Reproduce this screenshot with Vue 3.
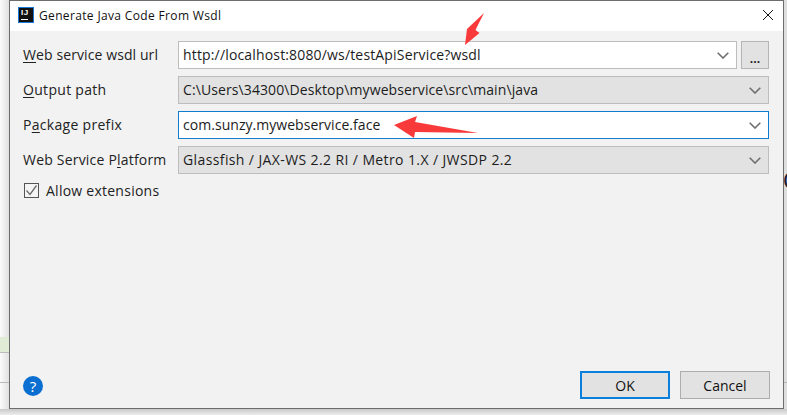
<script setup>
const rows = [
  { label: ['', 'W', 'eb service wsdl url'], value: 'http://localhost:8080/ws/testApiService?wsdl', kind: 'edit', more: true, ls: 0.1, vs: 0.16 },
  { label: ['', 'O', 'utput path'], value: 'C:\\Users\\34300\\Desktop\\mywebservice\\src\\main\\java', kind: 'plain', ls: 0.3, vs: 0.1 },
  { label: ['P', 'a', 'ckage prefix'], value: 'com.sunzy.mywebservice.face', kind: 'focus', ls: 0.3, vs: 0.04 },
  { label: ['Web Service P', 'l', 'atform'], value: 'Glassfish / JAX-WS 2.2 RI / Metro 1.X / JWSDP 2.2', kind: 'plain', ls: 0.2, vs: 0.39 },
]
</script>

<template>
  <div class="page">
    <div class="main">
      <div class="side">
        <div class="band"></div>
        <div class="line"></div>
      </div>
      <div class="dialog">
        <div class="titlebar">
          <div class="logo"><span class="ij">IJ</span><span class="bar"></span></div>
          <span class="title">Generate Java Code From Wsdl</span>
          <svg class="close" width="12" height="12" viewBox="0 0 12 12"><path d="M1 1L11 11M11 1L1 11" stroke="#111" stroke-width="1" fill="none"/></svg>
        </div>
        <div class="body">
          <div class="form">
            <div v-for="r in rows" :key="r.value" class="row">
              <label class="label" :style="{ letterSpacing: r.ls + 'px' }">{{ r.label[0] }}<u>{{ r.label[1] }}</u>{{ r.label[2] }}</label>
              <div class="combo" :class="r.kind">
                <span class="val" :style="{ letterSpacing: r.vs + 'px' }">{{ r.value }}</span>
                <svg class="chev" width="12" height="7" viewBox="0 0 12 7"><path d="M0.7 0.7L6 6L11.3 0.7" stroke="#6e6e6e" stroke-width="1.6" fill="none"/></svg>
              </div>
              <button v-if="r.more" class="more">...</button>
            </div>
            <label class="check">
              <span class="box"><svg width="13" height="13" viewBox="0 0 13 13"><path d="M1.5 6.5L5 10.5L11.5 1.5" stroke="#6b6b6b" stroke-width="1.3" fill="none"/></svg></span>
              <span>Allow extensions</span>
            </label>
          </div>
          <div class="footer">
            <div class="help">?</div>
            <div class="btns">
              <button class="btn ok">OK</button>
              <button class="btn">Cancel</button>
            </div>
          </div>
        </div>
        <svg class="arrow a1" width="22" height="34" viewBox="0 0 22 34"><path d="M20 0L3 16L1 32L15.5 20L11.5 17Z" fill="#f93a3a"/></svg>
        <svg class="arrow a2" width="86" height="24" viewBox="0 0 86 24"><path d="M1 10L24 1L22 7L85 18L22 17L21 23Z" fill="#f93a3a"/></svg>
      </div>
      <div class="rest">
        <span class="peek">C</span>
        <div class="line low"></div>
      </div>
    </div>
    <div class="under"></div>
  </div>
</template>

<style>
html, body { margin: 0; background: #fff; }
</style>

<style scoped>
.page {
  width: 787px;
  height: 415px;
  overflow: hidden;
  background: #e4e4e4;
  font-family: "Open Sans", "Noto Sans", sans-serif;
  color: #222;
  display: flex;
  flex-direction: column;
}
.main { display: flex; height: 409px; flex: none; }
.under { flex: 1; background: linear-gradient(180deg, #c9c9c9, #ececec); }
.side {
  width: 9px;
  flex: none;
  padding-top: 337px;
  box-sizing: border-box;
  background: linear-gradient(90deg, #fbfbfb, #e0e0e0);
}
.band { height: 15px; background: #e0ecd6; border-bottom: 1px solid #bcbcbc; }
.line { height: 1px; margin-top: 29px; background: #bcbcbc; }
.rest {
  flex: 1;
  position: relative;
  overflow: hidden;
  background: #dedede;
}
.peek {
  position: absolute;
  left: -1px;
  top: 166px;
  font: 24px/30px "Liberation Sans", sans-serif;
  color: #1c1c3a;
}
.line.low { margin-top: 382px; background: #b5b5b5; }
.dialog {
  position: relative;
  box-sizing: border-box;
  width: 775px;
  height: 409px;
  flex: none;
  background: #f2f2f2;
  border: 1px solid #6d6d6d;
  display: flex;
  flex-direction: column;
}
.titlebar {
  height: 30px;
  background: #fff;
  display: flex;
  align-items: center;
  padding: 0 9px 2px 8px;
  box-sizing: border-box;
  flex: none;
}
.logo {
  width: 16px;
  height: 16px;
  box-sizing: border-box;
  background: #111;
  border: 1px solid #1a78d8;
  position: relative;
  margin-right: 5px;
}
.ij { position: absolute; left: 2px; top: 0; font: bold 8px/10px "Liberation Sans", sans-serif; color: #fff; letter-spacing: 0.5px; }
.bar { position: absolute; left: 2px; bottom: 2px; width: 7px; height: 1px; background: #fff; }
.title { font-size: 12px; color: #111; flex: 1; letter-spacing: 0.35px; }
.body { flex: 1; display: flex; flex-direction: column; padding: 10px 14px 9px 13px; justify-content: space-between; }
.form { display: flex; flex-direction: column; gap: 7px; }
.row { display: flex; align-items: center; height: 28px; }
.label { width: 155px; font-size: 14px; flex: none; padding-bottom: 2px; }
.label u { text-decoration-thickness: 1px; text-underline-offset: 2px; }
.combo {
  flex: 1;
  height: 28px;
  box-sizing: border-box;
  border: 1px solid #bdbdbd;
  display: flex;
  align-items: center;
  justify-content: space-between;
  padding: 0 7px 0 4px;
  font-size: 14px;
  background: #e2e2e2;
  color: #1c1c1c;
}
.combo.edit, .combo.focus { background: #fff; }
.combo.focus { border-color: #0f7ed0; }
.val { white-space: pre; padding-bottom: 2px; }
.more {
  width: 28px;
  height: 28px;
  margin-left: 4px;
  box-sizing: border-box;
  border: 1px solid #b5b5b5;
  background: #e2e2e2;
  font: bold 12px/22px "Open Sans", sans-serif;
  padding: 6px 0 0;
  color: #222;
}
.check { display: flex; align-items: center; gap: 7px; font-size: 14px; letter-spacing: 0.25px; margin-top: -3px; height: 24px; }
.box {
  width: 15px;
  height: 15px;
  box-sizing: border-box;
  border: 1px solid #555;
  background: #f5f5f5;
  display: flex;
  align-items: center;
  justify-content: center;
  margin-left: 1px;
}
.footer { display: flex; align-items: center; justify-content: space-between; margin-right: -1px; }
.help {
  width: 20px;
  height: 20px;
  margin-top: 2px;
  border-radius: 50%;
  background: #0a6fd0;
  color: #fff;
  text-align: center;
  font: 15px/20px "Open Sans", sans-serif;
}
.btns { display: flex; gap: 10px; }
.btn {
  width: 90px;
  height: 28px;
  box-sizing: border-box;
  border: 1px solid #adadad;
  background: #e2e2e2;
  font: 14px "Open Sans", sans-serif;
  color: #111;
  padding: 0;
}
.btn.ok { border: 2px solid #0a80dc; }
.arrow { position: absolute; }
.a1 { left: 454px; top: 12px; }
.a2 { left: 383px; top: 114px; }
</style>
